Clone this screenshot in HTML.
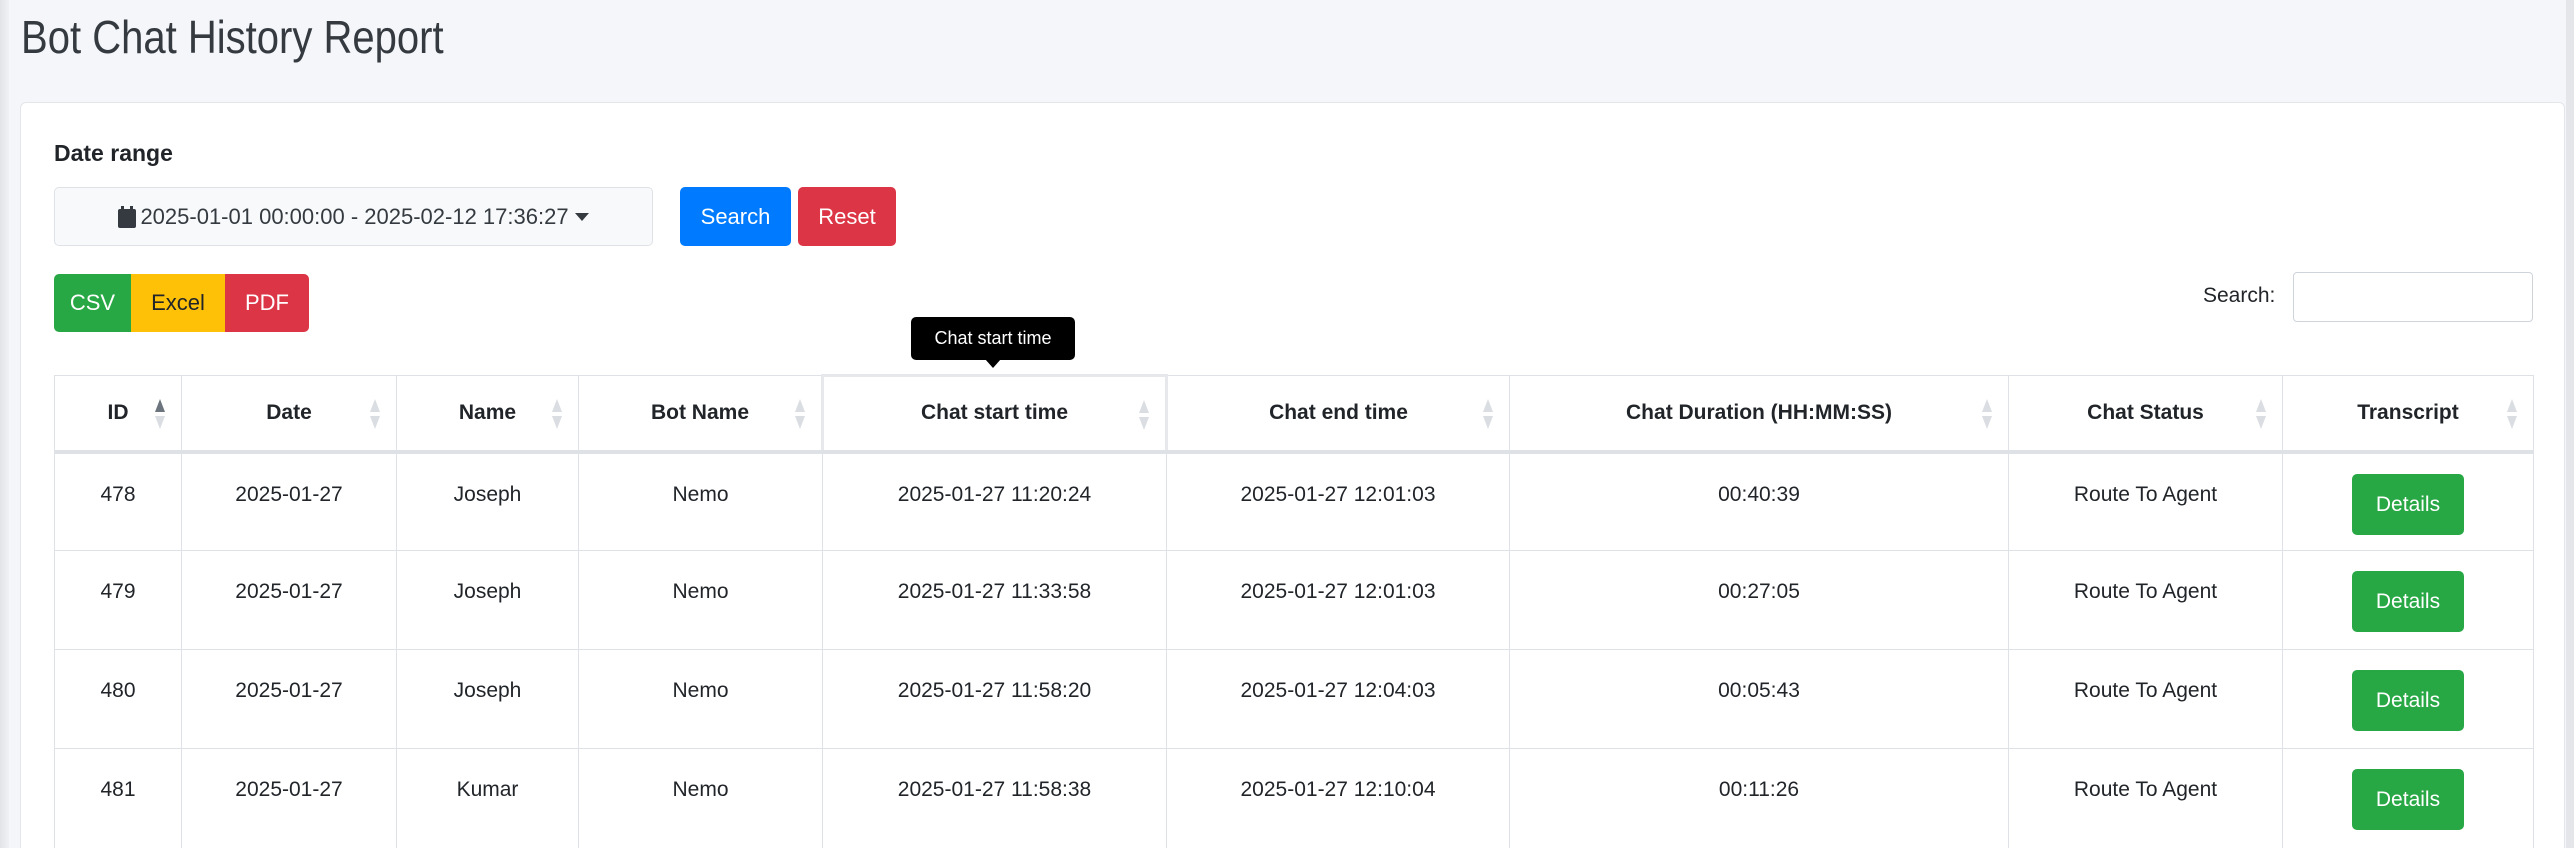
<!DOCTYPE html>
<html style="overflow:hidden;height:848px"><head><meta charset="utf-8"><style>
*{box-sizing:border-box;margin:0;padding:0}
body{width:2574px;height:848px;overflow:hidden;background:#f4f6f9;font-family:"Liberation Sans",sans-serif;color:#212529;position:relative}
.abs{position:absolute}
.lstrip{left:0;top:0;width:9px;height:848px;background:linear-gradient(90deg,#e3e4e7,#eff1f4)}
h1{position:absolute;left:21px;top:10px;font-weight:400;font-size:46px;color:#343a40;transform:scaleX(0.87);transform-origin:left top;white-space:nowrap}
.card{left:20px;top:102px;width:2545px;height:746px;background:#fff;border:1px solid #e3e6ea;border-bottom:none;border-radius:6px 6px 0 0}
.btn{position:absolute;color:#fff;font-size:22px;display:flex;align-items:center;justify-content:center;border-radius:5px}
.clip{position:absolute;left:54px;top:374px;width:2480px;height:474px;overflow:hidden}
table{border-collapse:collapse;table-layout:fixed;width:2479px}
td,th{border:1px solid #dee2e6;text-align:center;font-size:21px;position:relative}
th{height:76px;font-weight:700;border-bottom:4px solid #dee2e6;vertical-align:middle}
td{height:99px;vertical-align:top;padding-top:29px}
tr.last td{border-bottom:none;height:99px}
.s{position:absolute;right:16px;top:23px;width:10px;height:30px}
.s:before,.s:after{content:"";position:absolute;left:0;border-left:5px solid transparent;border-right:5px solid transparent}
.s:before{top:0;border-bottom:13px solid #dadde1}
.s:after{bottom:0;border-top:13px solid #dadde1}
.s.up:before{border-bottom-color:#6c757d}
.det{display:inline-block;background:#28a745;color:#fff;width:112px;height:61px;line-height:61px;border-radius:5px;font-size:21px;margin-top:-9px}
</style></head><body>
<div class="abs lstrip"></div>
<h1>Bot Chat History Report</h1>
<div class="abs card"></div>
<div class="abs" style="left:54px;top:140px;font-size:23px;font-weight:700">Date range</div>
<div class="abs" style="left:54px;top:187px;width:599px;height:59px;background:#f8f9fa;border:1px solid #dee2e6;border-radius:5px;display:flex;align-items:center;justify-content:center;font-size:22px;color:#343a40">
<svg width="18" height="22" viewBox="0 0 18 22" style="margin-right:4px"><rect x="0" y="3" width="18" height="19" rx="2" fill="#343a40"/><rect x="3" y="0" width="3" height="6" fill="#343a40"/><rect x="12" y="0" width="3" height="6" fill="#343a40"/></svg>2025-01-01 00:00:00 - 2025-02-12 17:36:27<span style="display:inline-block;margin-left:6px;border-left:7px solid transparent;border-right:7px solid transparent;border-top:8px solid #343a40"></span></div>
<div class="btn" style="left:680px;top:187px;width:111px;height:59px;background:#007bff">Search</div>
<div class="btn" style="left:798px;top:187px;width:98px;height:59px;background:#dc3545">Reset</div>
<div class="btn" style="left:54px;top:274px;width:77px;height:58px;background:#28a745;border-radius:5px 0 0 5px">CSV</div>
<div class="btn" style="left:131px;top:274px;width:94px;height:58px;background:#ffc107;color:#212529;border-radius:0">Excel</div>
<div class="btn" style="left:225px;top:274px;width:84px;height:58px;background:#dc3545;border-radius:0 5px 5px 0">PDF</div>
<div class="abs" style="left:2203px;top:284px;font-size:21px">Search:</div>
<div class="abs" style="left:2293px;top:272px;width:240px;height:50px;border:1px solid #ced4da;border-radius:4px;background:#fff"></div>
<div class="clip"><table>
<colgroup><col style="width:127px"><col style="width:215px"><col style="width:182px"><col style="width:244px"><col style="width:344px"><col style="width:343px"><col style="width:499px"><col style="width:274px"><col style="width:251px"></colgroup>
<tr><th>ID<span class="s up"></span></th><th>Date<span class="s"></span></th><th>Name<span class="s"></span></th><th>Bot Name<span class="s"></span></th><th style="border:3px solid #e6e8eb;border-bottom:4px solid #dee2e6">Chat start time<span class="s"></span></th><th>Chat end time<span class="s"></span></th><th>Chat Duration (HH:MM:SS)<span class="s"></span></th><th>Chat Status<span class="s"></span></th><th>Transcript<span class="s"></span></th></tr>
<tr><td>478</td><td>2025-01-27</td><td>Joseph</td><td>Nemo</td><td>2025-01-27 11:20:24</td><td>2025-01-27 12:01:03</td><td>00:40:39</td><td>Route To Agent</td><td><span class="det">Details</span></td></tr>
<tr><td>479</td><td>2025-01-27</td><td>Joseph</td><td>Nemo</td><td>2025-01-27 11:33:58</td><td>2025-01-27 12:01:03</td><td>00:27:05</td><td>Route To Agent</td><td><span class="det">Details</span></td></tr>
<tr><td>480</td><td>2025-01-27</td><td>Joseph</td><td>Nemo</td><td>2025-01-27 11:58:20</td><td>2025-01-27 12:04:03</td><td>00:05:43</td><td>Route To Agent</td><td><span class="det">Details</span></td></tr>
<tr class="last"><td>481</td><td>2025-01-27</td><td>Kumar</td><td>Nemo</td><td>2025-01-27 11:58:38</td><td>2025-01-27 12:10:04</td><td>00:11:26</td><td>Route To Agent</td><td><span class="det">Details</span></td></tr>
</table></div>
<div class="abs" style="left:911px;top:317px;width:164px;height:43px;background:#000;border-radius:5px;color:#fff;font-size:18px;display:flex;align-items:center;justify-content:center">Chat start time</div>
<div class="abs" style="left:985px;top:359px;border-left:8px solid transparent;border-right:8px solid transparent;border-top:9px solid #000"></div>
<div class="abs" style="left:2566px;top:0;width:8px;height:848px;background:#e4e6e9"></div>
</body></html>
